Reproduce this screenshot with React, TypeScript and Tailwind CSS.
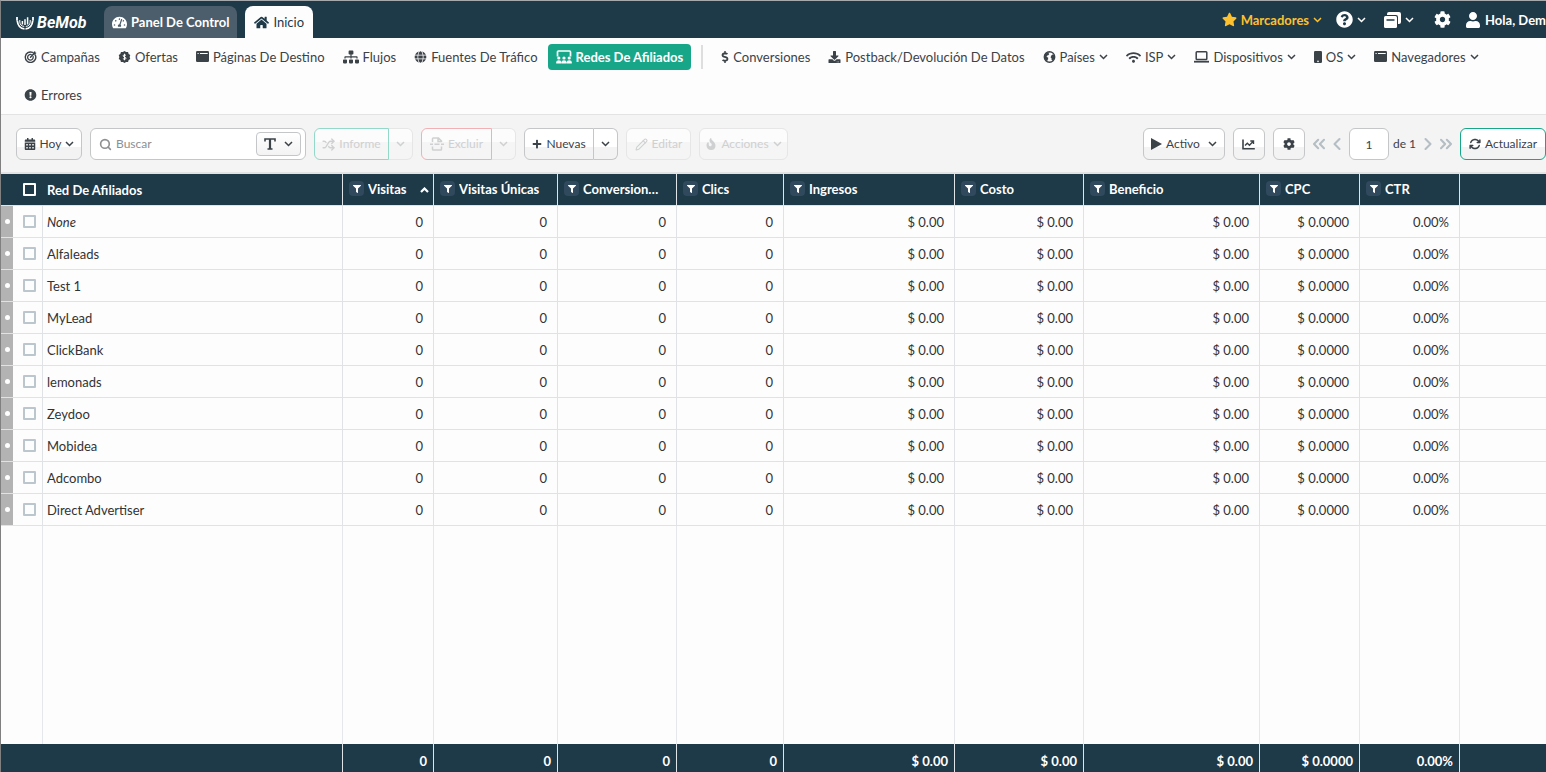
import type { ReactNode } from "react"
import {
  FaTachometerAlt, FaHome, FaSitemap, FaGlobe, FaDollarSign, FaDownload, FaWifi,
  FaExclamationCircle, FaStar, FaQuestionCircle, FaCog, FaUser, FaCalendarAlt, FaPlus, FaFilter,
} from "react-icons/fa"
import { FaArrowsRotate, FaFireFlameCurved } from "react-icons/fa6"
import { ChevronLeft, ChevronRight, ChevronsLeft, ChevronsRight, Pencil, Search, Shuffle } from "lucide-react"

const Logo = () => (
  <svg viewBox="0 0 18 14" className="shrink-0 w-[18px] h-[14px]" fill="none" stroke="currentColor">
    <path d="M1 1V4.500M17 1V4.500" strokeWidth="1.800" />
    <path d="M1.200 4.500C1.800 9.500 4 12.700 8.500 12.800M16.800 4.500C16.200 9.500 14 12.700 9.500 12.800" strokeWidth="1.800" />
    <path d="M3.800 4V6C4 8.800 5.500 10.200 8.200 10.400M14.200 4V6C14 8.800 12.500 10.200 9.800 10.400" strokeWidth="1" />
    <path d="M6.400 5V8.500M9 3.200V9M11.600 1.200V8.500" strokeWidth="1.500" />
  </svg>
)

const TargetIcon = () => (
  <svg viewBox="0 0 24 24" className="w-[13px] h-3" fill="none" stroke="currentColor" strokeLinecap="round">
    <path d="M16 2.7A10.5 10.5 0 1 0 21.6 8" strokeWidth="2.8" />
    <path d="M13.5 7.2A5.6 5.6 0 1 0 17.2 11" strokeWidth="2.6" />
    <path d="M12 12.6L18 6" strokeWidth="2.8" />
    <path d="M17.5 6.5V3L21 .8L21.5 3.4L23.4 4.2L20.5 7Z" fill="currentColor" strokeWidth="1" />
  </svg>
)

const OfferIcon = () => (
  <svg viewBox="0 0 24 24" className="w-[13px] h-3">
    <path fill="currentColor" d="M12 0l3.2 2.2 3.9-.1 1.2 3.7 3.2 2.3L22.3 12l1.2 3.9-3.2 2.3-1.2 3.7-3.9-.1L12 24l-3.2-2.2-3.9.1-1.2-3.7L.5 15.9 1.7 12 .5 8.1l3.2-2.3 1.2-3.7 3.9.1z" />
    <path d="M15 8.8C13 7.3 9.3 7.4 9.3 9.7C9.3 12.5 15 11.4 15 14.4C15 16.9 11 16.9 8.8 15.2M12 5.5V18.5" fill="none" stroke="#fff" strokeWidth="2" />
  </svg>
)

const WindowIcon = () => (
  <svg viewBox="0 0 13 12" className="w-[13px] h-3">
    <rect x="0" y="0" width="13" height="11" rx="1.2" fill="currentColor" />
    <path d="M1.5 2.500H2.700M4 2.500H11.700" stroke="#fff" strokeWidth="1" />
  </svg>
)

const NetworkIcon = () => (
  <svg viewBox="0 0 16 14" className="w-4 h-3.5" fill="currentColor">
    <path d="M1.5 6.500V2Q1.500 1 2.500 1H13.500Q14.500 1 14.500 2V6.500" fill="none" stroke="currentColor" strokeWidth="1.700" />
    <circle cx="2.8" cy="8" r="1.6" />
    <circle cx="8" cy="8" r="1.6" />
    <circle cx="13.2" cy="8" r="1.6" />
    <path d="M.2 13.500V12Q.2 10.300 2.800 10.300T5.300 12V13.500ZM5.500 13.500V12Q5.500 10.300 8 10.300T10.500 12V13.500ZM10.700 13.500V12Q10.700 10.300 13.200 10.300T15.800 12V13.500Z" />
  </svg>
)

const EarthIcon = () => (
  <svg viewBox="0 0 13 13" className="w-[13px] h-3" fill="none" stroke="currentColor">
    <circle cx="6.5" cy="6.5" r="5.7" strokeWidth="1.4" />
    <path d="M1.500 3.500L4 1.500H6.500L5.500 3L6 4L4 5L3.200 6.300L5 7.200L4.800 9L3.800 11L1.500 9L1 6.500ZM8.500 5L10 3.800L12 5V8L10 10.500L8.800 9.500L8.800 7.800L7.800 7Z" fill="currentColor" strokeWidth="0.200" />
  </svg>
)

const LaptopIcon = () => (
  <svg viewBox="0 0 15 12" className="w-[15px] h-3" fill="none" stroke="currentColor">
    <rect x="2.2" y="0.8" width="10.6" height="7.7" rx="0.8" strokeWidth="1.5" />
    <path d="M0 10.7H15" strokeWidth="1.8" />
  </svg>
)

const PhoneIcon = () => (
  <svg viewBox="0 0 8 12" className="w-2 h-3">
    <rect width="8" height="12" rx="1.2" fill="currentColor" />
    <circle cx="4" cy="10.4" r="0.8" fill="#fff" />
  </svg>
)

const StackIcon = () => (
  <svg viewBox="0 0 17 16" className="w-[17px] h-4">
    <path d="M5 0H15Q17 0 17 2V10Q17 12 15 12H14V5Q14 3 12 3H3V2Q3 0 5 0Z" fill="currentColor" />
    <rect x="0" y="4" width="13" height="12" rx="1.5" fill="currentColor" />
    <path d="M2.5 8H10.5" stroke="#1e3948" strokeWidth="1.5" />
  </svg>
)

const ExcludeIcon = () => (
  <svg viewBox="0 0 14 14" className="w-3.5 h-3.5" fill="none" stroke="currentColor" strokeWidth="1.5">
    <path d="M2.5 5V1.8Q2.5 1 3.3 1H8.5L11.5 4V5M2.5 9.5V12.2Q2.5 13 3.3 13H10.7Q11.5 13 11.5 12.2V9.5M8 1V4.5H11.5" />
    <path d="M0 7.2H3M4.5 7.2H9.5M11 7.2H14" />
  </svg>
)

const TextIcon = () => (
  <svg viewBox="0 0 12 12" className="w-3 h-3" fill="none" stroke="currentColor">
    <path d="M1 3.5V1H11V3.5M3.5 11H8.5" strokeWidth="1.6" />
    <path d="M6 1V11" strokeWidth="2.2" />
  </svg>
)

const ChartIcon = () => (
  <svg viewBox="0 0 13 11" className="w-[13px] h-[11px]" fill="none" stroke="currentColor" strokeWidth="1.6">
    <path d="M1 .5V9.7H12.8" />
    <path d="M3 6.6L5.3 4.2L7.5 6.2L11 2.6M8.3 2H11.5V5" strokeWidth="1.4" />
  </svg>
)

const PlayIcon = () => (
  <svg viewBox="0 0 11 12" className="w-[11px] h-3" fill="currentColor">
    <path d="M0 0L11 6L0 12Z" />
  </svg>
)

const Caret = () => (
  <svg viewBox="0 0 9 6" className="shrink-0 w-[9px] h-1.5" fill="none" stroke="currentColor" strokeWidth="1.5">
    <path d="M1 1L4.5 4.5L8 1" />
  </svg>
)

const SortIcon = () => (
  <svg viewBox="0 0 9 6" className="shrink-0 w-[9px] h-1.5 mt-0.5" fill="none" stroke="currentColor" strokeWidth="2.2">
    <path d="M1 5L4.5 1.5L8 5" />
  </svg>
)

interface NavItem {
  label: string;
  icon: ReactNode;
  active?: boolean;
  menu?: boolean;
}

const reports: NavItem[] = [
  { label: "Campañas", icon: <TargetIcon /> },
  { label: "Ofertas", icon: <OfferIcon /> },
  { label: "Páginas De Destino", icon: <WindowIcon /> },
  { label: "Flujos", icon: <FaSitemap size={16} /> },
  { label: "Fuentes De Tráfico", icon: <FaGlobe className="w-[13px] h-3" /> },
  { label: "Redes De Afiliados", icon: <NetworkIcon />, active: true },
]

const breakdowns: NavItem[] = [
  { label: "Conversiones", icon: <FaDollarSign className="w-2 h-3" /> },
  { label: "Postback/Devolución De Datos", icon: <FaDownload className="w-[13px] h-3" /> },
  { label: "Países", icon: <EarthIcon />, menu: true },
  { label: "ISP", icon: <FaWifi size={15} />, menu: true },
  { label: "Dispositivos", icon: <LaptopIcon />, menu: true },
  { label: "OS", icon: <PhoneIcon />, menu: true },
  { label: "Navegadores", icon: <WindowIcon />, menu: true },
  { label: "Errores", icon: <FaExclamationCircle className="w-[13px] h-3" /> },
]

const NavLink = ({ item }: { item: NavItem }) => (
  <a
    href="#"
    className={`flex items-center gap-1 h-[26px] px-2 rounded ${item.active ? "bg-[#18a689] text-white font-bold" : ""}`}
  >
    {item.icon}
    {item.label}
    {item.menu && <Caret />}
  </a>
)

const btn = "flex items-center justify-center gap-1 h-8 border bg-linear-to-b from-white from-60% to-[#f3f3f3] to-60%"
const disabled = "flex items-center justify-center gap-1 h-8 border text-[#cfd0d1] bg-linear-to-b from-[#fcfcfc] from-45% to-[#f5f5f5] to-45%"

interface Column {
  label: string;
  width: string;
  value: string;
  sorted?: boolean;
}

const columns: Column[] = [
  { label: "Visitas", width: "w-[91px]", value: "0", sorted: true },
  { label: "Visitas Únicas", width: "w-[124px]", value: "0" },
  { label: "Conversiones", width: "w-[119px]", value: "0" },
  { label: "Clics", width: "w-[107px]", value: "0" },
  { label: "Ingresos", width: "w-[171px]", value: "$ 0.00" },
  { label: "Costo", width: "w-[129px]", value: "$ 0.00" },
  { label: "Beneficio", width: "w-[176px]", value: "$ 0.00" },
  { label: "CPC", width: "w-[100px]", value: "$ 0.0000" },
  { label: "CTR", width: "w-[100px]", value: "0.00%" },
]

const networks = [
  "None", "Alfaleads", "Test 1", "MyLead", "ClickBank", "lemonads", "Zeydoo", "Mobidea", "Adcombo", "Direct Advertiser",
]

const TopBar = () => (
  <header className="flex h-[37px] shrink-0 bg-[#1e3948] text-white whitespace-nowrap overflow-hidden">
    <a href="#" className="flex items-center gap-[3px] ml-[15px] mr-4 w-[72px] pt-1.5 font-[Roboto] text-base font-bold italic">
      <Logo />
      BeMob
    </a>
    <nav className="flex items-end gap-2">
      <a href="#" className="flex items-center gap-1 h-8 px-2 rounded-t-lg bg-[#4c5e6b] font-bold">
        <FaTachometerAlt size={15} />
        Panel De Control
      </a>
      <a href="#" className="flex items-center gap-1 h-8 px-[9px] rounded-t-lg bg-[#fdfdfd] text-[#1e3948]">
        <FaHome size={15} />
        Inicio
      </a>
    </nav>
    <div className="flex items-center ml-auto">
      <button className="flex items-center gap-1 mr-3.5 text-[#fdc02f] font-bold">
        <FaStar size={15} />
        Marcadores
        <Caret />
      </button>
      <button aria-label="Ayuda" className="flex items-center gap-1 mr-[18px]">
        <FaQuestionCircle size={17} />
        <Caret />
      </button>
      <button aria-label="Ventanas" className="flex items-center gap-1 mr-5">
        <StackIcon />
        <Caret />
      </button>
      <button aria-label="Ajustes" className="mr-3.5">
        <FaCog size={17} />
      </button>
      <button className="flex items-center gap-1 font-bold">
        <FaUser size={16} />
        Hola, Dem
      </button>
    </div>
  </header>
)

const Toolbar = () => (
  <div className="flex shrink-0 gap-2 pt-[13px] pb-3 pl-[15px] border-y border-[#e3e3e3] bg-[#f4f4f4] text-xs whitespace-nowrap">
    <button className={`${btn} rounded-md w-[66px] border-[#c4c6c7]`}>
      <FaCalendarAlt size={12} />
      Hoy
      <Caret />
    </button>
    <div className="flex items-center w-[216px] h-8 pl-2 pr-1 gap-1 border border-[#c4c6c7] rounded-md bg-white">
      <Search size={13} strokeWidth={3} className="shrink-0 text-[#8d8f91]" />
      <input aria-label="Buscar" placeholder="Buscar" className="min-w-0 flex-1 outline-none placeholder:text-[#8d8f91]" />
      <button aria-label="Tipo de búsqueda" className="flex items-center justify-center gap-2 w-[45px] h-6 border border-[#c4c6c7] rounded bg-linear-to-b from-white to-[#f3f3f3]">
        <TextIcon />
        <Caret />
      </button>
    </div>
    <div className="flex">
      <button disabled className={`${disabled} rounded-l-md w-[75px] border-[#93d8c8]`}>
        <Shuffle size={13} strokeWidth={2.5} />
        Informe
      </button>
      <button disabled aria-label="Opciones de informe" className={`${disabled} rounded-r-md w-6 border-l-0 border-[#e6e6e6]`}>
        <Caret />
      </button>
    </div>
    <div className="flex">
      <button disabled className={`${disabled} rounded-l-md w-[71px] border-[#f0b0b5]`}>
        <ExcludeIcon />
        Excluir
      </button>
      <button disabled aria-label="Opciones de excluir" className={`${disabled} rounded-r-md w-6 border-l-0 border-[#e6e6e6]`}>
        <Caret />
      </button>
    </div>
    <div className="flex">
      <button className={`${btn} rounded-l-md w-[70px] border-[#c4c6c7]`}>
        <FaPlus size={10} />
        Nuevas
      </button>
      <button aria-label="Opciones de nuevas" className={`${btn} rounded-r-md w-6 border-l-0 border-[#c4c6c7]`}>
        <Caret />
      </button>
    </div>
    <button disabled className={`${disabled} rounded-md w-[65px] border-[#e6e6e6]`}>
      <Pencil size={13} />
      Editar
    </button>
    <button disabled className={`${disabled} rounded-md w-[89px] border-[#e6e6e6]`}>
      <FaFireFlameCurved size={12} />
      Acciones
      <Caret />
    </button>

    <div className="flex gap-2 ml-auto">
      <button className={`${btn} rounded-md w-[82px] border-[#c4c6c7]`}>
        <PlayIcon />
        <span className="mr-1">Activo</span>
        <Caret />
      </button>
      <button aria-label="Gráfico" className={`${btn} rounded-md w-8 border-[#c4c6c7]`}>
        <ChartIcon />
      </button>
      <button aria-label="Columnas" className={`${btn} rounded-md w-8 border-[#c4c6c7]`}>
        <FaCog size={12} />
      </button>
      <div className="flex items-center gap-2 text-[#b4bec4]">
        <button aria-label="Primera página" className="flex justify-center w-3">
          <ChevronsLeft size={20} strokeWidth={2.5} className="shrink-0" />
        </button>
        <button aria-label="Página anterior" className="flex justify-center w-2">
          <ChevronLeft size={20} strokeWidth={2.5} className="shrink-0" />
        </button>
        <label className="flex items-center gap-1 text-[#3b4248]">
          <input aria-label="Página" defaultValue="1" className="w-10 h-8 border border-[#c4c6c7] rounded-md bg-white text-center" />
          de 1
        </label>
        <button aria-label="Página siguiente" className="flex justify-center w-2">
          <ChevronRight size={20} strokeWidth={2.5} className="shrink-0" />
        </button>
        <button aria-label="Última página" className="flex justify-center w-3">
          <ChevronsRight size={20} strokeWidth={2.5} className="shrink-0" />
        </button>
      </div>
      <button className={`${btn} rounded-md w-[86px] border-[#18a689]`}>
        <FaArrowsRotate size={12} />
        Actualizar
      </button>
    </div>
  </div>
)

const checkbox = "block w-[13px] h-[13px] ml-2.5 appearance-none border-2 rounded-[1px]"

const NetworksTable = () => (
  <div className="flex-1 min-h-0 border-t border-[#e3e3e3]">
    <table className="w-full h-full table-fixed border-separate border-spacing-0 whitespace-nowrap">
      <colgroup>
        <col className="w-3" />
        <col className="w-[30px]" />
        <col className="w-[300px]" />
        {columns.map((c) => <col key={c.label} className={c.width} />)}
        <col />
      </colgroup>
      <thead className="bg-[#1e3948] text-white text-left">
        <tr>
          <th className="h-8 p-0 border-b border-[#dfe4e8]" />
          <th className="p-0 border-b border-[#dfe4e8]">
            <input type="checkbox" aria-label="Seleccionar todo" className={`${checkbox} border-white`} />
          </th>
          <th className="p-0 pl-1 border-r border-b border-[#dfe4e8]">Red De Afiliados</th>
          {columns.map((c) => (
            <th key={c.label} className="p-0 border-r border-b border-[#dfe4e8]">
              <div className="flex items-center gap-1 pl-1.5 pr-1 pb-0.5">
                <button aria-label={`Filtrar ${c.label}`} className="flex items-center justify-center shrink-0 w-[15px] h-[15px] rounded-sm bg-[#30495c]">
                  <FaFilter size={8} />
                </button>
                <span className={`flex-1 truncate ${c.sorted ? "" : "mr-3"}`}>{c.label}</span>
                {c.sorted && <SortIcon />}
              </div>
            </th>
          ))}
          <th className="border-b border-[#dfe4e8]" />
        </tr>
      </thead>
      <tbody className="text-[#333]">
        {networks.map((name, i) => (
          <tr key={name}>
            <td className="h-8 p-0 border-b border-[#dfe3e6] bg-[#b3b3b3]">
              <div className="w-[5px] h-[5px] mx-auto rounded-full bg-white" />
            </td>
            <td className="p-0 border-b border-r border-[#dfe3e6]">
              <input type="checkbox" aria-label={name} className={`${checkbox} border-[#bcc7cd]`} />
            </td>
            <td className={`p-0 pl-1 border-b border-r border-[#dfe3e6] ${i === 0 ? "italic" : ""}`}>{name}</td>
            {columns.map((c) => (
              <td key={c.label} className="p-0 pr-2.5 border-b border-r border-[#dfe3e6] text-right">{c.value}</td>
            ))}
            <td className="border-b border-[#dfe3e6]" />
          </tr>
        ))}
        <tr aria-hidden="true">
          <td />
          <td className="border-r border-[#e4e8eb]" />
          <td className="border-r border-[#e4e8eb]" />
          {columns.map((c) => <td key={c.label} className="border-r border-[#e4e8eb]" />)}
          <td />
        </tr>
      </tbody>
      <tfoot className="bg-[#1e3948] text-white font-bold">
        <tr>
          <td colSpan={3} className="h-7 p-0 border-r border-[#dfe4e8]" />
          {columns.map((c) => (
            <td key={c.label} className="p-0 pt-1.5 pr-1.5 border-r border-[#dfe4e8] text-right">{c.value}</td>
          ))}
          <td />
        </tr>
      </tfoot>
    </table>
  </div>
)

const App = () => {
  return (
    <div className="flex flex-col h-screen overflow-hidden border-t border-l border-t-[#a5a9ab] border-l-[#808080] bg-[#fdfdfd] font-[Lato,'Liberation_Sans',sans-serif] text-[13px] leading-5 text-[#3b4248]">
      <TopBar />
      <nav className="flex flex-wrap shrink-0 gap-x-0.5 gap-y-3 pl-[15px] py-1.5 whitespace-nowrap">
        {reports.map((item) => <NavLink key={item.label} item={item} />)}
        <div className="w-0.5 h-6 mt-px ml-2 mr-2 bg-[#dedede]" />
        {breakdowns.map((item) => <NavLink key={item.label} item={item} />)}
      </nav>
      <Toolbar />
      <NetworksTable />
    </div>
  )
}

export default App
